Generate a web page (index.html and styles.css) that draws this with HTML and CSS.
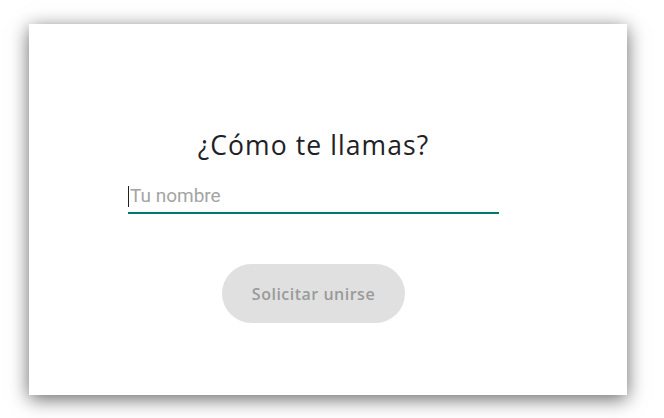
FILE: index.html
```html
<!DOCTYPE html>
<html lang="es">
<head>
<meta charset="utf-8">
<link rel="stylesheet" href="styles.css">
</head>
<body>
<div class="card">
  <div class="content">
    <h1 class="title">¿Cómo te llamas?</h1>
    <div class="field">
      <span class="caret"></span>
      <input class="name-input" type="text" placeholder="Tu nombre">
    </div>
    <button class="join-btn" type="button" disabled>Solicitar unirse</button>
  </div>
</div>
</body>
</html>
```

FILE: styles.css
```css
html, body {
  margin: 0;
  padding: 0;
  background: #ffffff;
}
body {
  width: 664px;
  height: 418px;
  overflow: hidden;
  padding-top: 24px;
  box-sizing: border-box;
}
.card {
  margin-left: 29px;
  width: 598px;
  height: 371px;
  background: #ffffff;
  box-shadow: 0 4px 18px rgba(0, 0, 0, 0.6);
  box-sizing: border-box;
  padding-left: 99px;
  padding-top: 103px;
}
.content {
  width: 371px;
  display: flex;
  flex-direction: column;
  align-items: center;
}
.title {
  margin: 0;
  font-family: "Open Sans", sans-serif;
  font-weight: 400;
  font-size: 26.5px;
  line-height: 36px;
  color: #202124;
  letter-spacing: 1.1px;
}
.field {
  position: relative;
  width: 371px;
  margin-top: 18px;
  border-bottom: 2px solid #00796b;
}
.caret {
  position: absolute;
  left: 0;
  top: 5px;
  width: 1px;
  height: 21px;
  background: #202124;
}
.name-input {
  display: block;
  width: 100%;
  box-sizing: border-box;
  border: 0;
  outline: none;
  padding: 2px 0 3px 2px;
  margin: 0;
  font-family: "Roboto", sans-serif;
  font-size: 19px;
  line-height: 26px;
  color: #202124;
  background: transparent;
}
.name-input::placeholder {
  color: #a4a4a4;
}
.join-btn {
  margin-top: 50px;
  width: 183px;
  height: 59px;
  border: 0;
  border-radius: 30px;
  background: #e0e0e0;
  color: #9a9a9a;
  font-family: "Open Sans", sans-serif;
  font-weight: 600;
  font-size: 16px;
  letter-spacing: 0.5px;
  padding: 0;
}
```
